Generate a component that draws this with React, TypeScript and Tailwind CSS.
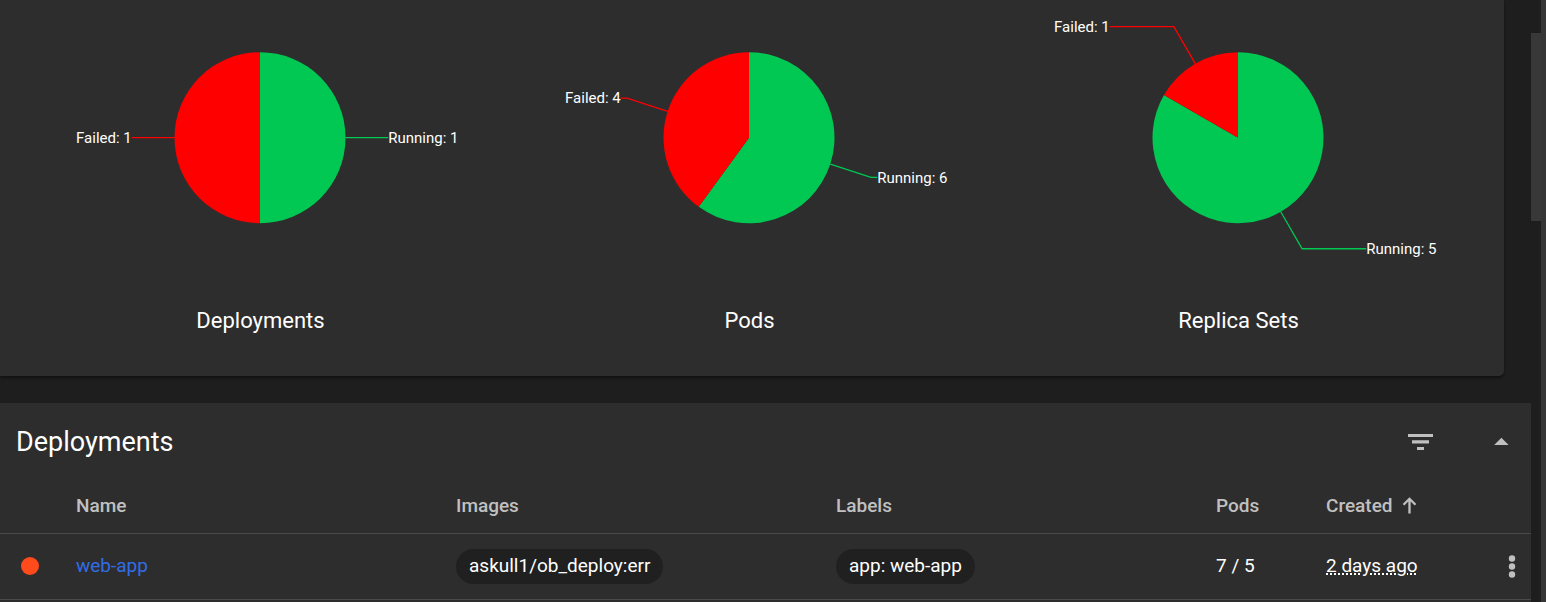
const GREEN = '#00c853';
const RED = '#ff0000';
const RADIUS = 85.5;
const CX = 244;
const CY = 137.7;

type Ratio = { title: string; running: number; failed: number };

const ratios: Ratio[] = [
  { title: 'Deployments', running: 1, failed: 1 },
  { title: 'Pods', running: 6, failed: 4 },
  { title: 'Replica Sets', running: 5, failed: 1 },
];

function polar(angle: number, r: number): [number, number] {
  return [CX + Math.sin(angle) * r, CY - Math.cos(angle) * r];
}

function Slice({ from, to, color, label }: { from: number; to: number; color: string; label: string }) {
  const a = from * 2 * Math.PI;
  const b = to * 2 * Math.PI;
  const mid = (a + b) / 2;
  const [x1, y1] = polar(a, RADIUS);
  const [x2, y2] = polar(b, RADIUS);
  const [ex, ey] = polar(mid, RADIUS);
  const [ox, oy] = polar(mid, RADIUS * 1.5);
  const right = mid < Math.PI;
  const lx = CX + (right ? 1 : -1) * RADIUS * 1.5;
  return (
    <g>
      <path d={`M${CX} ${CY}L${x1} ${y1}A${RADIUS} ${RADIUS} 0 ${b - a > Math.PI ? 1 : 0} 1 ${x2} ${y2}Z`} fill={color} />
      <polyline points={`${ex},${ey} ${ox},${oy} ${lx},${oy}`} fill="none" stroke={color} strokeWidth="1.3" />
      <text x={lx} y={oy + 5.3} textAnchor={right ? 'start' : 'end'} className="fill-white text-[15px]">
        {label}
      </text>
    </g>
  );
}

function PieChart({ title, running, failed }: Ratio) {
  const split = running / (running + failed);
  return (
    <figure className="flex min-w-0 flex-1 flex-col items-center">
      <svg viewBox="0 0 489 301" className="h-[301px] w-full" role="img" aria-label={title}>
        <Slice from={0} to={split} color={GREEN} label={`Running: ${running}`} />
        <Slice from={split} to={1} color={RED} label={`Failed: ${failed}`} />
      </svg>
      <figcaption className="text-[22px] leading-10">{title}</figcaption>
    </figure>
  );
}

export default function App() {
  return (
    <div className="flex bg-[#1e1e1e] font-['Roboto',sans-serif] text-white">
      <main className="min-w-0 flex-1 overflow-hidden">
        <section className="mr-[27px] flex rounded-br-[5px] bg-[#2d2d2d] pr-[21px] pb-[35px] pl-4 shadow-[0_2px_3px_rgba(0,0,0,0.45)]">
          {ratios.map((r) => (
            <PieChart key={r.title} {...r} />
          ))}
        </section>

        <section className="mt-[27px] bg-[#2d2d2d] pb-1">
          <header className="flex h-[77px] items-center justify-between pl-4">
            <h2 className="text-[27px] leading-8">Deployments</h2>
            <div className="flex items-center gap-[49px] pr-[14px] text-[#c0c0c0]">
              <button type="button" aria-label="Filter" className="block">
                <svg viewBox="0 0 32 32" className="size-8" fill="currentColor">
                  <path d="M4 8h25v3H4zM8 14.200h17v3.300H8zM13 21h7v3h-7z" />
                </svg>
              </button>
              <button type="button" aria-label="Collapse" className="block">
                <svg viewBox="0 0 32 32" className="size-8" fill="currentColor">
                  <path d="M9.200 19l7.200-7.200L23.600 19z" />
                </svg>
              </button>
            </div>
          </header>

          <table className="w-full table-fixed border-collapse text-left text-[19px] leading-6">
            <colgroup>
              <col className="w-[76px]" />
              <col />
              <col />
              <col />
              <col className="w-[110px]" />
              <col className="w-[150px]" />
              <col className="w-[55px]" />
            </colgroup>
            <thead>
              <tr className="h-[53px] border-b border-[#4a4a4a] text-[#c0c0c0] [&>th]:font-medium">
                <th aria-label="Status" />
                <th>Name</th>
                <th>Images</th>
                <th>Labels</th>
                <th>Pods</th>
                <th aria-sort="ascending">
                  <span className="flex items-center gap-2">
                    Created
                    <svg viewBox="0 0 16 20" className="h-5 w-4" fill="none" stroke="currentColor" strokeWidth="2.300">
                      <path d="M8.500 17.500V3M2.500 8.800L8.500 2.800L14.500 8.800" />
                    </svg>
                  </span>
                </th>
                <th aria-label="Actions" />
              </tr>
            </thead>
            <tbody>
              <tr className="h-[66px] border-b border-[#4a4a4a]">
                <td>
                  <span className="ml-[21px] block size-[18px] rounded-full bg-[#ff4a1c]" />
                </td>
                <td>
                  <a href="#web-app" className="text-[#326de6]">web-app</a>
                </td>
                <td>
                  <span className="block h-[35px] w-fit rounded-full bg-[#202020] px-[13px] leading-[33px]">askull1/ob_deploy:err</span>
                </td>
                <td>
                  <span className="block h-[35px] w-fit rounded-full bg-[#202020] px-[13px] leading-[33px]">app: web-app</span>
                </td>
                <td>7 / 5</td>
                <td>
                  <span className="underline decoration-dotted decoration-2">2 days ago</span>
                </td>
                <td>
                  <button type="button" aria-label="Actions" className="ml-5 block">
                    <svg viewBox="0 0 32 32" className="size-8" fill="currentColor" color="#c0c0c0">
                      <circle cx="16" cy="8.500" r="3.200" />
                      <circle cx="16" cy="16.500" r="3.200" />
                      <circle cx="16" cy="24.500" r="3.200" />
                    </svg>
                  </button>
                </td>
              </tr>
            </tbody>
          </table>
        </section>
      </main>
      <div className="w-[10px] shrink-0 pt-[33px]">
        <div className="h-[188px] bg-[#383838]" />
      </div>
      <div className="w-[5px] shrink-0 bg-[#363636]" />
    </div>
  );
}
